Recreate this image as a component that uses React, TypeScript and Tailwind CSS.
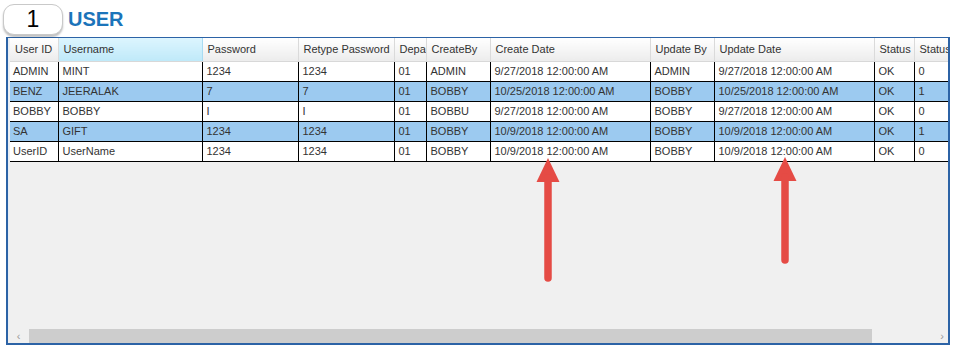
const columns = [
  { title: "User ID", width: 48 },
  { title: "Username", width: 144 },
  { title: "Password", width: 96 },
  { title: "Retype Password", width: 96 },
  { title: "Department", width: 32 },
  { title: "CreateBy", width: 64 },
  { title: "Create Date", width: 160 },
  { title: "Update By", width: 64 },
  { title: "Update Date", width: 160 },
  { title: "Status", width: 40 },
  { title: "Status", width: 40 },
];

const rows = [
  ["ADMIN", "MINT", "1234", "1234", "01", "ADMIN", "9/27/2018 12:00:00 AM", "ADMIN", "9/27/2018 12:00:00 AM", "OK", "0"],
  ["BENZ", "JEERALAK", "7", "7", "01", "BOBBY", "10/25/2018 12:00:00 AM", "BOBBY", "10/25/2018 12:00:00 AM", "OK", "1"],
  ["BOBBY", "BOBBY", "I", "I", "01", "BOBBU", "9/27/2018 12:00:00 AM", "BOBBY", "9/27/2018 12:00:00 AM", "OK", "0"],
  ["SA", "GIFT", "1234", "1234", "01", "BOBBY", "10/9/2018 12:00:00 AM", "BOBBY", "10/9/2018 12:00:00 AM", "OK", "1"],
  ["UserID", "UserName", "1234", "1234", "01", "BOBBY", "10/9/2018 12:00:00 AM", "BOBBY", "10/9/2018 12:00:00 AM", "OK", "0"],
];

const selected = [1, 3];

function Arrow({ x, top, bottom }: { x: number; top: number; bottom: number }) {
  return (
    <svg
      className="absolute pointer-events-none"
      style={{ left: x - 14, top: top - 2, width: 28, height: bottom - top + 6 }}
      viewBox={`0 0 28 ${bottom - top + 6}`}
    >
      <polygon points={`14,2 25.5,26 2.5,26`} fill="#e54b45" />
      <line
        x1="14"
        y1="22"
        x2="14"
        y2={bottom - top}
        stroke="#e54b45"
        strokeWidth="7.5"
        strokeLinecap="round"
      />
    </svg>
  );
}

function App() {
  return (
    <div className="relative w-[956px] h-[351px] bg-white overflow-hidden font-['Liberation_Sans',Arial,sans-serif] text-[#333]">
      <div className="flex items-center h-[37px]">
        <div className="ml-[3px] mt-[1px] w-[60px] h-[31px] rounded-[11px] border border-[#c9c9c9] bg-white shadow-[0_2px_2px_rgba(0,0,0,0.25)] flex items-center justify-center text-[23px] text-black leading-none">
          1
        </div>
        <div className="ml-[5px] text-[20px] font-bold text-[#1b74ba] leading-none">USER</div>
      </div>

      <div className="ml-[6px] w-[944px] h-[308px] border-l-2 border-r-2 border-t border-b-2 border-[#2c63a6] bg-[#f0f0f0] flex flex-col overflow-hidden">
        <div className="flex-1 pl-[1px] overflow-hidden border-l border-[#e6eef7]">
          <table className="w-[944px] table-fixed border-collapse text-[11px] leading-none">
            <colgroup>
              {columns.map((c, i) => (
                <col key={i} style={{ width: c.width }} />
              ))}
            </colgroup>
            <thead>
              <tr className="h-[23px]">
                {columns.map((c, i) => (
                  <th
                    key={i}
                    className={
                      i === 1
                        ? "font-normal text-left pl-[5px] whitespace-nowrap overflow-hidden text-clip bg-gradient-to-b from-[#dcf5fe] to-[#bfe9f9] border-r border-[#a9dcf2] border-b border-b-[#d8d8d8]"
                        : "font-normal text-left pl-[5px] whitespace-nowrap overflow-hidden text-clip bg-gradient-to-b from-white to-[#ececec] border-r border-[#dadada] border-b border-b-[#d8d8d8]"
                    }
                  >
                    {c.title}
                  </th>
                ))}
              </tr>
            </thead>
            <tbody>
              {rows.map((r, ri) => (
                <tr
                  key={ri}
                  className={selected.includes(ri) ? "h-[20px] bg-[#9ccaf0]" : "h-[20px] bg-white"}
                >
                  {r.map((v, ci) => (
                    <td
                      key={ci}
                      className={
                        ci === 0
                          ? "pl-[3px] whitespace-nowrap overflow-hidden border-b border-black"
                          : "pl-[4px] whitespace-nowrap overflow-hidden border-b border-l border-black"
                      }
                    >
                      {v}
                    </td>
                  ))}
                </tr>
              ))}
            </tbody>
          </table>
        </div>

        <div className="h-[14px] flex items-stretch bg-[#f0f0f0]">
          <div className="w-[21px] flex items-center justify-center text-[11px] text-[#9a9a9a] leading-none">‹</div>
          <div className="w-[843px] bg-[#cdcdcd]" />
          <div className="flex-1 flex items-center justify-end pr-[4px] text-[11px] text-[#9a9a9a] leading-none">›</div>
        </div>
      </div>

      <Arrow x={548} top={158} bottom={280} />
      <Arrow x={785} top={157} bottom={262} />
    </div>
  );
}

export default App;
